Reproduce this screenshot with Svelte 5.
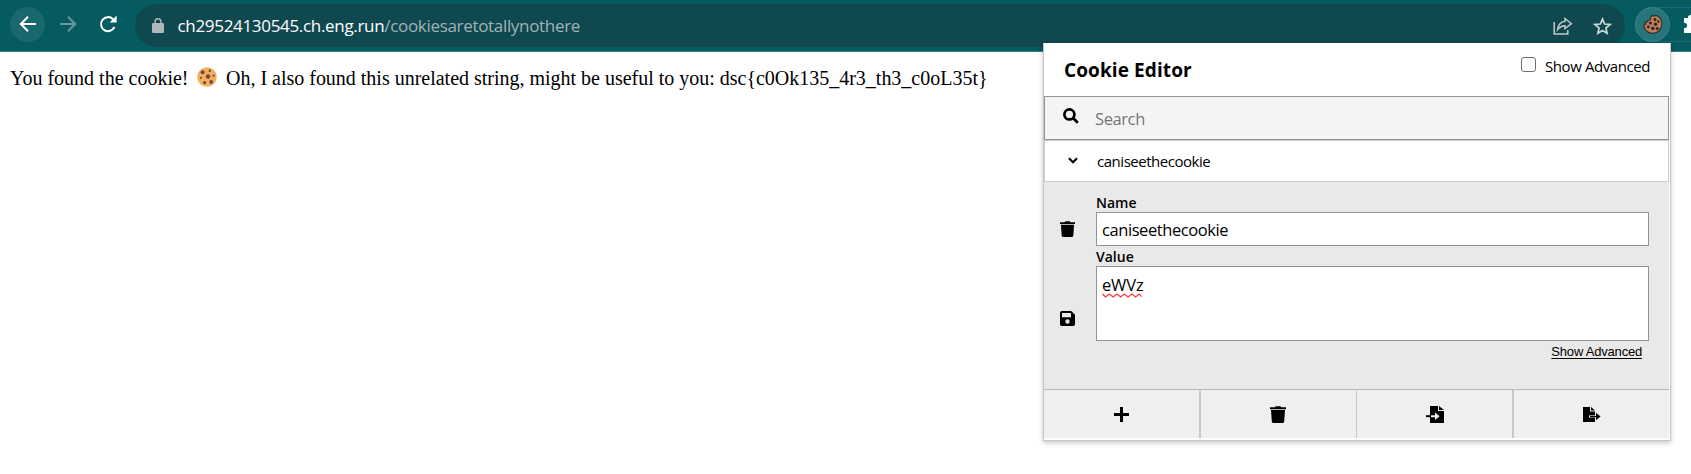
<script>
  let search = $state('');
  let name = $state('caniseethecookie');
</script>

{#snippet trash()}
  <svg class="trash" viewBox="0 0 16 17"><path d="M0 1.2h5L5.6.2h4.8l.6 1H16v2H0zM1 4h14l-.8 11.4Q14 17 12.5 17h-9Q2 17 1.8 15.4z" /></svg>
{/snippet}

<div class="page">
  <header class="toolbar">
    <span class="back"><svg width="18" height="18" viewBox="0 0 18 18"><path d="M17 9H2M9 1.8 1.8 9 9 16.2" /></svg></span>
    <svg class="forward" width="18" height="18" viewBox="0 0 18 18"><path d="M1 9h15M9 1.8 16.2 9 9 16.2" /></svg>
    <svg class="reload" width="18" height="18" viewBox="0 0 18 18"><path d="M15.4 12A7 7 0 1 1 14 4.2" /><path class="solid" d="M17.6.6v7h-7z" /></svg>
    <div class="omnibox">
      <svg class="lock" width="12" height="15" viewBox="0 0 12 15"><path d="M1.3 5H2.4V3.7a3.6 3.6 0 0 1 7.2 0V5h1.1A1.3 1.3 0 0 1 12 6.3v7.4a1.3 1.3 0 0 1-1.3 1.3H1.3A1.3 1.3 0 0 1 0 13.7V6.3A1.3 1.3 0 0 1 1.3 5zM3.9 5h4.2V3.7a2.1 2.1 0 0 0-4.2 0z" /></svg>
      <span class="url"><b>ch29524130545.ch.eng.run</b><i>/cookiesaretotallynothere</i></span>
      <svg class="share" width="20" height="18" viewBox="0 0 20 18"><path d="M1.2 5v12h13.6v-4" /><path d="M12 1.5 18.4 6.7 12 11.5V8.7Q8 8.5 4.6 12.5 5.5 5.2 12 4.2z" /></svg>
      <svg class="star" width="19" height="18" viewBox="0 0 19 18"><path d="m9.5 2 2.1 5 5.4.5-4.1 3.5 1.2 5.2-4.6-2.8-4.6 2.8 1.2-5.2L2 7.5 7.4 7z" /></svg>
    </div>
    <div class="extensions">
      <span class="ext"><svg width="20" height="21" viewBox="0 0 20 21"><path d="M9 1.2q3 1.8 3 0 5 1 6.3 5.2Q20 12 16.2 16.7 12 20.6 6.3 18.6 1 16.8 1 11l2-1-1-2q2.5.5 3-1.5Q8 6.5 7.5 4z" fill="#c67c52" stroke="#253638" stroke-width="1.2" /><g fill="#202a2b"><circle cx="12" cy="5.6" r="1.5" /><circle cx="7.4" cy="9" r="1.5" /><circle cx="12.5" cy="10.2" r="1.7" /><circle cx="15.5" cy="7.5" r="1.2" /><circle cx="5.3" cy="13" r="1.4" /><circle cx="9.8" cy="14.4" r="1.7" /><circle cx="14.2" cy="14.4" r="1.5" /></g></svg></span>
      <svg class="puzzle" width="18" height="20" viewBox="0 0 18 20"><path d="M1 4h4q-.2-3 2.5-3T10 4h6v15H1v-5q3 0 3-2.6T1 8.7z" /></svg>
    </div>
  </header>

  <main>
    <span class="found">You found the cookie!</span>
    <svg class="cookie" width="20" height="20" viewBox="0 0 20 20"><circle cx="10" cy="10" r="9.8" fill="#f3ad61" /><g fill="#70483e"><circle cx="11" cy="9.5" r="2.2" /><circle cx="5.6" cy="5.3" r="2" /><circle cx="12.8" cy="3.8" r="1.2" /><circle cx="16.6" cy="8.7" r="1.1" /><circle cx="3.9" cy="10.8" r="1.1" /><circle cx="7.6" cy="15.6" r="1.6" /><circle cx="14.2" cy="14.9" r="1.9" /></g></svg>
    <span class="flag">Oh, I also found this unrelated string, might be useful to you: dsc&lbrace;c0Ok135_4r3_th3_c0oL35t&rbrace;</span>
  </main>

  <section class="popup">
    <div class="title">
      <h1>Cookie Editor</h1>
      <label><input type="checkbox" /><span>Show Advanced</span></label>
    </div>
    <div class="search">
      <svg width="16" height="16" viewBox="0 0 16 16"><circle cx="6.4" cy="6.4" r="5" /><path d="m10 10 4.8 4.8" /></svg>
      <input placeholder="Search" bind:value={search} />
    </div>
    <div class="row">
      <svg width="10" height="7" viewBox="0 0 10 7"><path d="m1 1.2 4 4 4-4" /></svg>
      <span>caniseethecookie</span>
    </div>
    <div class="details">
      <div class="actions">
        {@render trash()}
        <svg class="save" width="15" height="15" viewBox="0 0 15 15"><path fill-rule="evenodd" d="M1.8 0h9.4L15 3.8v9.4q0 1.8-1.8 1.8H1.8Q0 15 0 13.2V1.8Q0 0 1.8 0zM2 2v4.3h9V2zM7.5 8.3a2.2 2.2 0 1 0 0 4.4 2.2 2.2 0 0 0 0-4.4z" /></svg>
      </div>
      <div class="form">
        <div class="label">Name</div>
        <input bind:value={name} />
        <div class="label value">Value</div>
        <div class="area"><span>eWVz<svg width="43" height="5" viewBox="0 0 43 5"><path d="M.5 1 3.5 4l4-3 3.5 3 4-3 3.5 3 4-3 3.5 3 4-3 3.5 3 4-3 2 2.6" /></svg></span></div>
        <div class="more"><span>Show Advanced</span></div>
      </div>
    </div>
    <div class="buttons">
      <div><svg width="15" height="15" viewBox="0 0 15 15"><path d="M6 0h3v6h6v3H9v6H6V9H0V6h6z" /></svg></div>
      <div>{@render trash()}</div>
      <div><svg width="18" height="17" viewBox="0 0 18 17"><path d="M4 0h8v5h6v12H4zM13 0l5 4h-5z" /><path d="M0 9.2h5v2H0z" /><path fill="#efefef" d="M5 9.2h4V6.4l4.6 3.8L9 14v-2.8H5z" /></svg></div>
      <div><svg class="out" width="18" height="15" viewBox="0 0 18 15"><path d="M0 0h7v4.6h5V15H0zM8 0l4 3.6H8z" /><path fill="#efefef" d="M6 8.4h6v2.2H6z" /><path d="M7 9h6V5.8l4.6 3.7-4.6 3.7v-3H7z" /></svg></div>
    </div>
  </section>
</div>

<style>
  :global(body) { background: #fff; overflow: hidden; }
  .page { position: relative; height: 474px; width: 1691px; overflow: hidden; box-sizing: border-box; color: #000; font-family: "Open Sans", "Noto Sans", sans-serif; }
  svg { display: block; flex: none; }
  .page :is(div, header, section, input) { box-sizing: border-box; }

  .toolbar { display: flex; align-items: center; height: 52px; padding: 0 0 3px 10px; background: #055b60; border-bottom: 1px solid #377c80; }
  .toolbar svg { fill: none; stroke: #fff; stroke-width: 2; }
  .back { display: grid; place-items: center; flex: none; width: 35px; height: 35px; border-radius: 50%; background: #19686d; }
  .toolbar .forward { margin-left: 14px; stroke: #69999c; }
  .toolbar .reload { margin-left: 22px; }
  .toolbar .solid { fill: #fff; stroke: none; }
  .omnibox { display: flex; align-items: center; flex: none; margin: 3px 0 0 18px; width: 1490px; height: 43px; border-radius: 22px; background: #0f484e; }
  .toolbar .lock { margin: 0 0 0 17px; fill: #b0b8ba; stroke: none; fill-rule: evenodd; }
  .url { flex: 1; margin-left: 13.5px; font-size: 17px; letter-spacing: -.32px; line-height: 24px; color: #fff; white-space: nowrap; }
  .url b { font-weight: 400; }
  .url i { font-style: normal; color: #9fb4b6; }
  .toolbar .share { stroke: #c0c8c9; stroke-width: 1.5; }
  .toolbar .star { margin: 0 13px 0 20px; stroke: #d0d6d7; stroke-width: 1.7; }
  .extensions { display: flex; align-items: center; margin-left: 10px; width: 70px; flex: none; height: 35px; border: 1px solid #1c696e; border-radius: 18px 0 0 18px; }
  .ext { display: grid; place-items: center; flex: none; width: 35px; height: 35px; margin-left: -1px; border-radius: 50%; background: #27757a; border: 1px solid #3b8387; box-sizing: border-box; }
  .toolbar .ext svg { stroke: none; }
  .toolbar .puzzle { margin-left: 13px; fill: #fff; stroke: none; }

  main { display: flex; height: 52px; padding-left: 10px; font: 20px/52px "Liberation Serif", serif; white-space: nowrap; }
  .cookie { margin: 15px 9px 0 8.5px; }
  .flag { letter-spacing: -.01px; }

  .popup { position: absolute; left: 1043px; top: 43px; width: 628px; height: 398px; padding: 0 1px 1px 0; background: #fff; border: 1px solid #c6c6c6; border-top: 0; box-shadow: 0 2px 5px rgba(0, 0, 0, .22); box-sizing: border-box; }
  .title { display: flex; justify-content: space-between; height: 53px; padding: 0 19px 0 20px; }
  h1 { margin: 13px 0 0; font-size: 19px; letter-spacing: .1px; line-height: 28px; font-weight: 700; }
  label { display: flex; height: 22px; margin-top: 13px; font-size: 15px; letter-spacing: -.42px; line-height: 20px; }
  label input { appearance: none; width: 15px; height: 15px; margin: 1px 9px 0 0; border: 1px solid #707070; border-radius: 3px; }
  .search { display: flex; height: 44px; border: 1px solid #949494; background: #f4f4f4; }
  .search svg { margin: 11px 0 0 18px; fill: none; stroke: #000; stroke-width: 2.7; }
  .search input { flex: 1; margin: 1px 0 0 16px; padding: 0; border: 0; outline: 0; background: transparent; font: 16.5px "Open Sans", sans-serif; letter-spacing: -.4px; }
  .search input::placeholder { color: #757575; }
  .row { display: flex; height: 42px; border: 1px solid #ccc; font-size: 15px; letter-spacing: -.47px; line-height: 41px; }
  .row svg { margin: 16px 0 0 23px; fill: none; stroke: #000; stroke-width: 2.2; }
  .row span { margin-left: 19px; }
  .details { display: flex; height: 207px; background: #e9e9e9; }
  .actions { width: 52px; padding: 39px 0 0 16px; }
  .trash { width: 15px; height: 16px; }
  .save { margin-top: 74px; }
  .form { flex: 1; padding: 12px 20px 0 0; }
  .label { height: 18px; font-size: 14px; line-height: 18px; font-weight: 600; }
  .form input { display: block; width: 100%; height: 34px; padding: 0 5px; border: 1px solid #949494; outline: 0; background: #fff; font: 16.5px "Open Sans", sans-serif; letter-spacing: -.43px; }
  .value { height: 20px; line-height: 22px; }
  .area { height: 75px; padding: 5px; border: 1px solid #949494; background: #fff; font-size: 16.5px; letter-spacing: -.15px; line-height: 25px; }
  .area span { position: relative; }
  .area svg { position: absolute; left: 0; top: 20px; fill: none; stroke: #f33; stroke-width: 1.2; }
  .more { padding-right: 7px; text-align: right; font: 13px/22px "Liberation Sans", sans-serif; letter-spacing: -.2px; }
  .more span { text-decoration: underline; text-underline-offset: 2px; }
  .buttons { display: grid; grid-template-columns: 157px 156px 157px 1fr; height: 49px; border-top: 1px solid #bbb; background: #efefef; }
  .buttons div { display: grid; place-items: center; border-right: 2px solid #c9c9c9; }
  .buttons div:nth-child(2) { border-right-width: 1px; padding-right: 1px; }
  .buttons div:last-child { border-right: 0; }
  .buttons .trash { width: 16px; height: 17px; }
</style>
